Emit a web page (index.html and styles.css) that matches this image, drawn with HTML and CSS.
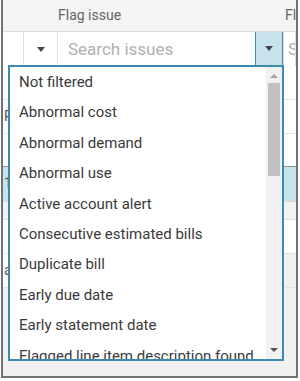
FILE: index.html
```html
<!DOCTYPE html>
<html lang="en">
<head>
  <meta charset="UTF-8">
  <title>Flag issue filter</title>
  <link rel="stylesheet" href="styles.css">
</head>
<body>
  <div class="frame">
    <div class="grid">
      <div class="head">
        <div class="cell"></div>
        <div class="cell"></div>
        <div class="cell title">Flag issue</div>
        <div class="cell title more">Flag status</div>
      </div>

      <div class="filters">
        <div class="cell"></div>
        <div class="cell center"><span class="caret"></span></div>
        <div class="cell search">
          <input type="text" placeholder="Search issues">
          <button class="drop"><span class="caret"></span></button>
        </div>
        <div class="cell ph">Search</div>
      </div>

      <div class="row"><div class="cell first"></div><div class="cell rest"></div></div>
      <div class="row"><div class="cell first txt">Pending</div><div class="cell rest"></div></div>
      <div class="row line"><div class="cell first"></div><div class="cell rest"></div></div>
      <div class="row selected"><div class="cell first txt">10/04/2023</div><div class="cell rest"></div></div>
      <div class="row sub"><div class="cell first"></div><div class="cell rest"></div></div>
      <div class="row"><div class="cell first"></div><div class="cell rest"></div></div>
      <div class="row empty"><div class="cell first txt">and</div><div class="cell rest"></div></div>
    </div>

    <div class="list">
      <ul class="items">
        <li>Not filtered</li>
        <li>Abnormal cost</li>
        <li>Abnormal demand</li>
        <li>Abnormal use</li>
        <li>Active account alert</li>
        <li>Consecutive estimated bills</li>
        <li>Duplicate bill</li>
        <li>Early due date</li>
        <li>Early statement date</li>
        <li>Flagged line item description found</li>
      </ul>
      <div class="scroll">
        <span class="arrow up"></span>
        <div class="thumb"></div>
        <span class="arrow down"></span>
      </div>
    </div>
  </div>
</body>
</html>
```

FILE: styles.css
```css
body {
  margin: 0;
  font-family: Roboto, "Liberation Sans", Arial, sans-serif;
  background-color: #fff;
  color: #444;
}

.frame {
  position: relative;
  box-sizing: border-box;
  width: 297px;
  height: 378px;
  margin-left: 1px;
  border: 2px solid #6f7378;
  border-top: none;
  background-color: #f0f0f0;
  overflow: hidden;
}

.grid {
  display: flex;
  flex-direction: column;
}

.head,
.filters {
  display: grid;
  grid-template-columns: 21px 34px 226px 1fr;
}

.head {
  height: 31px;
  background-color: #f4f4f4;
  border-bottom: 1px solid #dcdcdc;
}

.cell {
  box-sizing: border-box;
  overflow: hidden;
  white-space: nowrap;
}

.title {
  font-size: 14px;
  line-height: 31px;
  color: #666;
}

.more {
  padding-left: 1px;
}

.filters {
  height: 34px;
  background-color: #fff;
}

.filters > .cell {
  border-right: 1px solid #e0e0e0;
}

.center {
  display: flex;
  align-items: center;
  justify-content: center;
}

.caret {
  display: block;
  width: 0;
  height: 0;
  border-left: 4px solid transparent;
  border-right: 4px solid transparent;
  border-top: 5px solid #444;
}

.search {
  display: flex;
}

.search > input {
  flex-grow: 1;
  min-width: 0;
  border: none;
  outline: none;
  padding: 0 0 0 10px;
  font-family: inherit;
  font-size: 17px;
  color: #444;
  background: transparent;
}

.search > input::placeholder {
  color: #b0b0b0;
}

.drop {
  box-sizing: border-box;
  width: 33px;
  height: 35px;
  margin-top: -1px;
  padding: 0;
  border: 1px solid #3d8fb2;
  background: #c6e2ec;
  display: flex;
  align-items: center;
  justify-content: center;
}

.ph {
  font-size: 17px;
  line-height: 34px;
  padding-left: 4px;
  color: #b0b0b0;
}

.row {
  display: flex;
  height: 33px;
  background-color: #fff;
  border-bottom: 1px solid #e4e4e4;
}

.row .first {
  width: 55px;
  font-size: 14px;
  line-height: 33px;
  padding-left: 1px;
  color: #555;
}

.row .rest {
  flex-grow: 1;
}

.row.line {
  height: 32px;
  border-bottom: 1px solid #8a9096;
}

.row.selected {
  height: 34px;
  background-color: #c9e3ed;
  border-bottom: 1px solid #d8d8d8;
}

.row.sub {
  height: 17px;
  background-color: #f2f2f2;
}

.row.empty .rest {
  background-color: #f0f0f0;
}

.list {
  position: absolute;
  left: 5px;
  top: 65px;
  box-sizing: border-box;
  width: 276px;
  height: 296px;
  border: 2px solid #3a8bb0;
  background-color: #fff;
  display: flex;
}

.items {
  flex-grow: 1;
  margin: 0;
  padding: 0;
  list-style: none;
  overflow: hidden;
}

.items > li {
  height: 30.4px;
  line-height: 30.4px;
  padding-left: 9px;
  font-size: 15px;
  color: #3a3a3a;
  white-space: nowrap;
}

.scroll {
  width: 16px;
  display: flex;
  flex-direction: column;
  align-items: center;
  background-color: #f1f1f1;
}

.arrow {
  display: block;
  width: 0;
  height: 0;
  border-left: 4px solid transparent;
  border-right: 4px solid transparent;
}

.up {
  margin: 7px 0 5px;
  border-bottom: 4px solid #a3a3a3;
}

.down {
  margin: auto 0 7px;
  border-top: 4px solid #505050;
}

.thumb {
  width: 12px;
  height: 93px;
  background-color: #c1c1c1;
}
```
